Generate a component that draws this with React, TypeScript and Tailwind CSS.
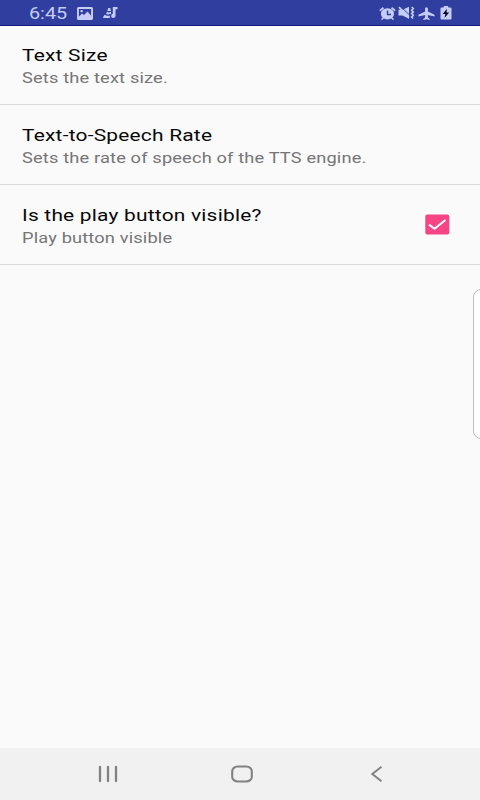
import type { ReactNode } from "react";

function StatusBar() {
  return (
    <header className="flex h-[26px] shrink-0 items-center border-b border-[#11197c] bg-[#303f9f] pl-[29px] text-[#c5cdf6]">
      <span className="w-[47px] whitespace-nowrap pt-[2px] text-[16.2px] leading-[26px]">
        <span className="inline-block origin-left scale-x-[1.22]">6:45</span>
      </span>
      <svg className="mt-px ml-px h-[13px] w-[16px]" viewBox="0 0 16 13">
        <path
          fill="currentColor"
          fillRule="evenodd"
          d="M1.5 0h13A1.5 1.5 0 0 1 16 1.5v10a1.5 1.5 0 0 1-1.5 1.5h-13A1.5 1.5 0 0 1 0 11.500v-10A1.500 1.500 0 0 1 1.500 0ZM1.900 1.900v8.900h12.200V1.900ZM1.900 10.800V9.700L5 6.500l2 1.600 3.500-3.600 3.600 4.200V10.800ZM4.600 2.900a1.300 1.200 0 1 1 0 2.400 1.300 1.200 0 0 1 0-2.400Z"
        />
      </svg>
      <svg className="mt-px ml-[10px] h-[12px] w-[15px]" viewBox="0 0 15 12" fill="currentColor">
        <path d="M9.800 0H14.500V2.200H12.500V8.600A2.200 2.100 0 1 1 10.500 6.800L9.800 6.700Z" />
        <path d="M5.200 1H7.200L8 3.900H4.300Z" />
        <path d="M3.800 4.700 5.800 5.400 8 4.800V6.800L5.200 7.600 3.200 6.900ZM1.800 7.700 4 8.800H6.800V11H.2V9.800Z" />
      </svg>
      <div className="ml-auto flex items-center pt-px pr-[28px]">
        <svg className="h-[13px] w-[17px]" viewBox="0 0 17 13">
          <ellipse cx="8.500" cy="6.800" rx="6.600" ry="5.600" fill="currentColor" />
          <path d="M.8 3.600 4.500.8M16.200 3.600 12.500.8" stroke="currentColor" strokeWidth="1.800" />
          <path d="M2.500 12.600 4.500 10.800M14.500 12.600 12.500 10.800" stroke="currentColor" strokeWidth="1.500" />
          <path d="M8.500 3.500V7.500H12" fill="none" stroke="#303f9f" strokeWidth="1.400" />
        </svg>
        <svg className="ml-[2px] h-[14px] w-[17px]" viewBox="0 0 17 14">
          <path d="M.5 3.800H4.500L11 .8V12.800L4.500 9.600H.5Z" fill="currentColor" />
          <path d="M2.500.5 11.300 8.700" stroke="#303f9f" strokeWidth=".9" />
          <path d="M1 1.200 11 11.700" stroke="currentColor" strokeWidth="1.800" />
          <path
            d="M13.700 1 15.200 2.500 13.700 4.200 15.200 5.900 13.700 7.600 15.200 9.300 13.700 11 15 12.500"
            fill="none"
            stroke="currentColor"
            strokeWidth="1.700"
          />
        </svg>
        <svg className="ml-[3px] h-[13px] w-[17px]" viewBox="0 0 16 13" fill="currentColor">
          <path d="M6.600 1.200Q8-.8 9.400 1.200V4.400L16 7.800V9.500L9.400 7.900V10.500L11.200 11.900V13L8 12.300 4.800 13V11.900L6.600 10.500V7.900L0 9.500V7.800L6.600 4.400Z" />
        </svg>
        <svg className="ml-[5px] h-[14px] w-[12px]" viewBox="0 0 12 14">
          <path d="M3.800 0H8.200V1.500H10.500Q11.500 1.500 11.500 2.500V12.700Q11.500 13.500 10.500 13.500H1.500Q.5 13.500.5 12.700V2.500Q.5 1.500 1.500 1.500H3.800Z" fill="currentColor" />
          <path d="M7 2.800 2.700 8H5.400L4.500 12 9.200 6.600H6.500Z" fill="#05091f" />
        </svg>
      </div>
    </header>
  );
}

type PreferenceProps = { title: string; summary: string; children?: ReactNode };

function Preference({ title, summary, children }: PreferenceProps) {
  return (
    <li className="flex h-[80px] items-start justify-between border-b border-[#dadada] pl-[21.5px] pr-[31px]">
      <div className="pt-[19px] whitespace-nowrap">
        <div className="origin-left scale-x-[1.21] text-[17.3px] leading-[22px] tracking-[0.18px] text-[#080808]">{title}</div>
        <div className="mt-[2px] origin-left scale-x-[1.2] text-[15.2px] leading-[20px] tracking-[0.13px] text-[#757575]">{summary}</div>
      </div>
      {children}
    </li>
  );
}

function CheckedBox() {
  return (
    <svg role="checkbox" aria-checked="true" className="mt-[29px] -mr-px h-[21px] w-[25px]" viewBox="0 0 25 21">
      <rect x=".3" y=".6" width="24" height="19.800" rx="2" fill="#f74484" />
      <path d="M4 10.600 9.500 14.800 20.500 6" fill="none" stroke="#fff" strokeWidth="2" />
    </svg>
  );
}

function NavigationBar() {
  return (
    <nav className="flex h-[52px] shrink-0 items-center bg-[#f1f1f1] pl-[98px] text-[#828282]">
      <svg className="h-[18px] w-[20px]" viewBox="0 0 20 18">
        <path d="M2 2V16M10 2V16M18 2V16" stroke="currentColor" strokeWidth="2.300" strokeLinecap="round" />
      </svg>
      <svg className="ml-[113px] h-[18px] w-[22px]" viewBox="0 0 22 18">
        <rect x="1.200" y="1.500" width="19.600" height="15" rx="5.500" ry="4.800" fill="none" stroke="currentColor" strokeWidth="2.100" />
      </svg>
      <svg className="ml-[117px] h-[18px] w-[13px]" viewBox="0 0 13 18">
        <path d="M11.500 1.800 2.300 9 11.500 16.200" fill="none" stroke="currentColor" strokeWidth="2" />
      </svg>
    </nav>
  );
}

export default function App() {
  return (
    <div className="relative flex h-[800px] w-[480px] flex-col overflow-hidden bg-[#fafafa] font-['Roboto',sans-serif]">
      <StatusBar />
      <ul className="-mt-px flex-1">
        <Preference title="Text Size" summary="Sets the text size." />
        <Preference title="Text-to-Speech Rate" summary="Sets the rate of speech of the TTS engine." />
        <Preference title="Is the play button visible?" summary="Play button visible">
          <CheckedBox />
        </Preference>
      </ul>
      <NavigationBar />
      <div className="absolute top-[289px] right-[-12px] h-[150px] w-[19px] rounded-l-[8px] border border-[#bdbdbd] bg-white" />
    </div>
  );
}
